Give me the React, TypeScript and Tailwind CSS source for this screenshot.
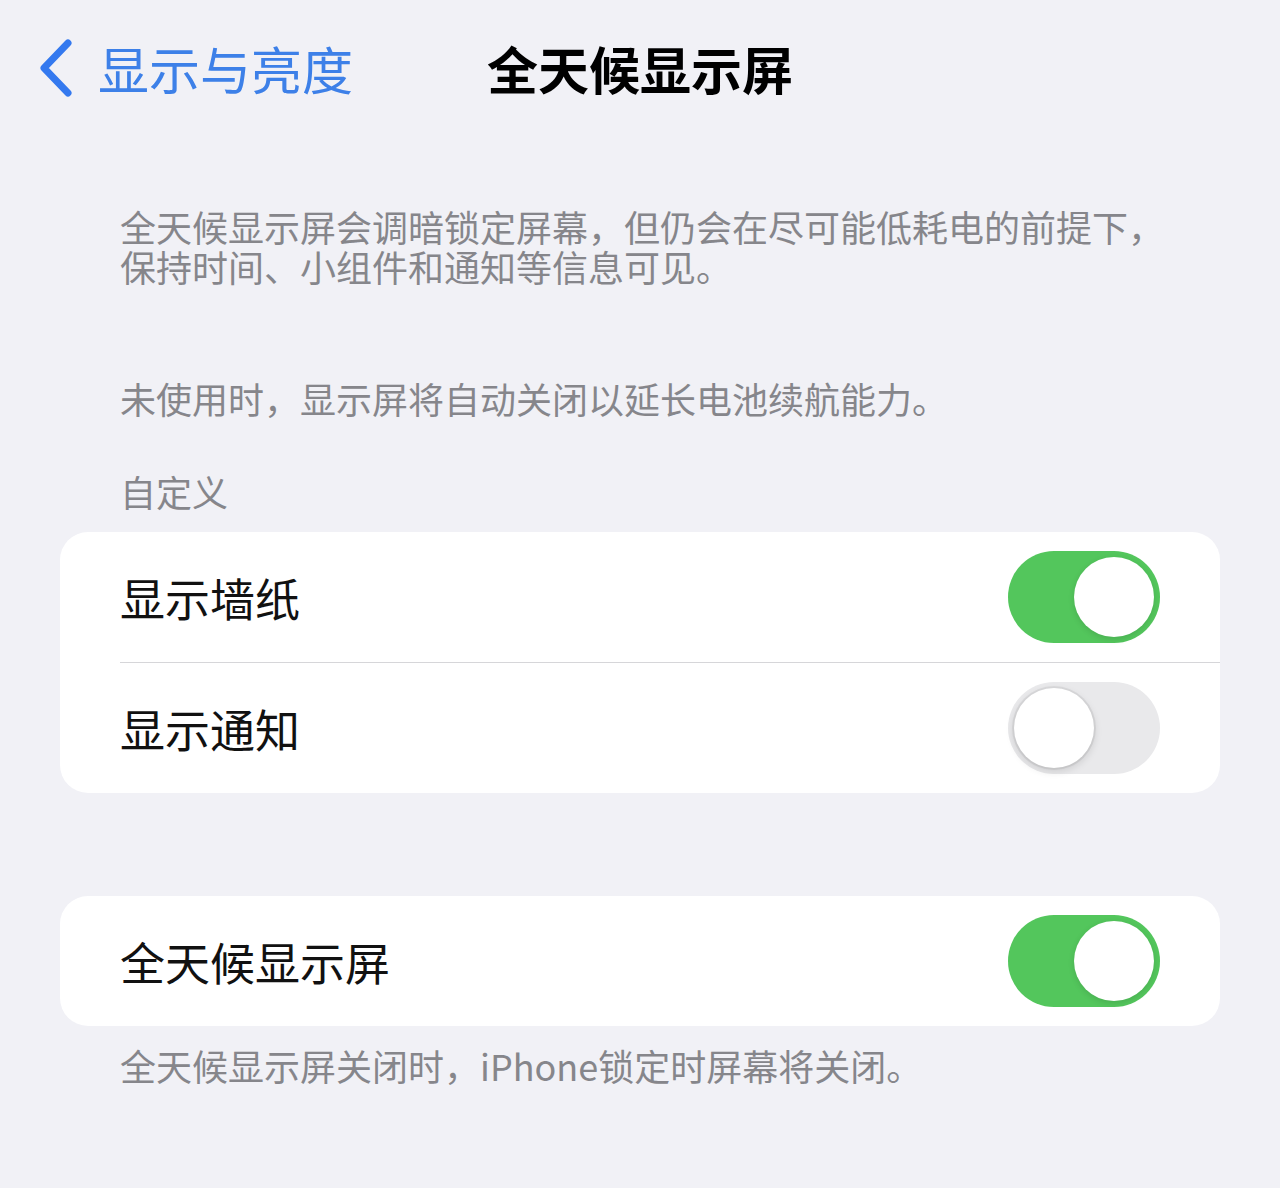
import React, { useState } from "react";

const FONT = {
    fontFamily: '"Noto Sans CJK SC", "Noto Sans", "Liberation Sans", sans-serif',
};

interface ToggleProps {
    on: boolean;
    onChange: () => void;
}

const Toggle: React.FC<ToggleProps> = ({ on, onChange }) => (
    <button
        type="button"
        onClick={onChange}
        className={`relative flex h-[92px] w-[152px] shrink-0 items-center rounded-full p-[6px] transition-colors ${
            on ? "justify-end bg-[#53c65c]" : "justify-start bg-[#e9e9eb]"
        }`}
    >
        <span
            className={`block h-[80px] w-[80px] rounded-full bg-white ${
                on
                    ? "shadow-[0_2px_6px_rgba(0,0,0,0.12)]"
                    : "shadow-[0_0_0_2px_rgba(0,0,0,0.06),0_3px_8px_rgba(0,0,0,0.14)]"
            }`}
        />
    </button>
);

interface RowProps {
    label: string;
    on: boolean;
    onChange: () => void;
    divider?: boolean;
}

const Row: React.FC<RowProps> = ({ label, on, onChange, divider }) => (
    <div className={divider ? "border-b border-[#d6d6d9]" : ""}>
        <div className="flex h-[130px] items-center justify-between pr-[60px]">
            <span className="text-[45px] leading-none text-[#111]">{label}</span>
            <Toggle on={on} onChange={onChange} />
        </div>
    </div>
);

export default function App() {
    const [wallpaper, setWallpaper] = useState(true);
    const [notifications, setNotifications] = useState(false);
    const [alwaysOn, setAlwaysOn] = useState(true);

    return (
        <div style={FONT} className="min-h-[1188px] w-[1280px] bg-[#f1f1f6]">
            {/* Nav bar */}
            <div className="grid h-[136px] grid-cols-[1fr_auto_1fr] items-center">
                <div className="flex items-center gap-[24px] pl-[38px]">
                    <svg width="36" height="58" viewBox="0 0 36 58" fill="none">
                        <path
                            d="M30 4 L6 29 L30 54"
                            stroke="#3479ef"
                            strokeWidth="7"
                            strokeLinecap="round"
                            strokeLinejoin="round"
                        />
                    </svg>
                    <span className="text-[51px] leading-none text-[#3d80e8]">显示与亮度</span>
                </div>
                <h1 className="text-[51px] font-bold leading-none text-black">全天候显示屏</h1>
                <div />
            </div>

            <div className="px-[60px]">
                <div className="mt-[70px] pl-[60px] pr-[50px] text-[36px] leading-[40px] text-[#86868b]">
                    <p>全天候显示屏会调暗锁定屏幕，但仍会在尽可能低耗电的前提下，保持时间、小组件和通知等信息可见。</p>
                    <p className="mt-[92px]">未使用时，显示屏将自动关闭以延长电池续航能力。</p>
                    <p className="mt-[53px]">自定义</p>
                </div>

                <div className="mt-[21px] rounded-[28px] bg-white pl-[60px]">
                    <Row
                        label="显示墙纸"
                        on={wallpaper}
                        onChange={() => setWallpaper(!wallpaper)}
                        divider
                    />
                    <Row
                        label="显示通知"
                        on={notifications}
                        onChange={() => setNotifications(!notifications)}
                    />
                </div>

                <div className="mt-[103px] rounded-[28px] bg-white pl-[60px]">
                    <Row label="全天候显示屏" on={alwaysOn} onChange={() => setAlwaysOn(!alwaysOn)} />
                </div>

                <p className="mt-[19px] px-[60px] text-[36px] leading-[40px] text-[#86868b]">
                    全天候显示屏关闭时，iPhone锁定时屏幕将关闭。
                </p>
            </div>
        </div>
    );
}
